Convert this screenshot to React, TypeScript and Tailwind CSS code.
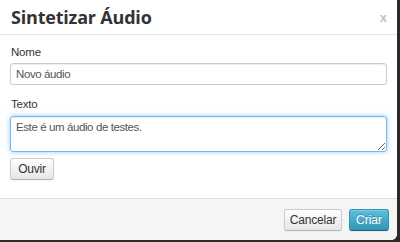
import React from 'react';

const App: React.FC = () => {
  return (
    <div className="w-[400px] h-[242px] bg-[#2a2a2a] overflow-hidden">
      <div className="w-[397px] h-[240px] bg-white rounded-br-[6px] flex flex-col overflow-hidden font-['Liberation_Sans',Arial,sans-serif] text-[#333]">
        {/* header */}
        <div className="h-[35px] border-b border-[#e5e5e5] flex items-center justify-between pl-[11px] pr-[10px]">
          <h3 className="font-['Open_Sans',sans-serif] font-bold text-[18px] leading-none text-[#333] tracking-[-0.2px]">Sintetizar Áudio</h3>
          <span className="text-[#c4c4c4] text-[13px] font-bold leading-none">x</span>
        </div>

        {/* body */}
        <div className="flex-1 px-[10px] pt-[10px]">
          <label className="block text-[11.5px] leading-[14px] tracking-[-0.2px] mb-[4px] pl-[1px]">Nome</label>
          <input
            readOnly
            value="Novo áudio"
            className="block w-[377px] h-[22px] border border-[#ccc] rounded-[3px] px-[5px] text-[11.5px] tracking-[-0.4px] text-[#555] shadow-[inset_0_1px_1px_rgba(0,0,0,0.075)] outline-none"
          />

          <label className="block text-[11.5px] leading-[14px] tracking-[-0.2px] mt-[12px] mb-[5px] pl-[1px]">Texto</label>
          <textarea
            readOnly
            value="Este é um áudio de testes."
            className="block w-[377px] h-[36px] border border-[rgba(82,168,236,0.8)] rounded-[3px] px-[5px] py-[3px] text-[11.5px] leading-[14px] tracking-[-0.4px] text-[#555] shadow-[inset_0_1px_1px_rgba(0,0,0,0.075),0_0_5px_rgba(82,168,236,0.6)] outline-none resize-y"
          />

          <button className="mt-[6px] h-[22px] w-[44px] border border-[#ccc] border-b-[#b3b3b3] rounded-[3px] bg-gradient-to-b from-white to-[#e6e6e6] text-[12px] tracking-[-0.2px] text-[#333] shadow-[inset_0_1px_0_rgba(255,255,255,0.2),0_1px_2px_rgba(0,0,0,0.05)]">
            Ouvir
          </button>
        </div>

        {/* footer */}
        <div className="h-[42px] bg-[#f5f5f5] border-t border-[#ddd] flex items-start justify-end gap-[7px] pt-[10px] pr-[8px]">
          <button className="h-[22px] w-[58px] border border-[#ccc] border-b-[#b3b3b3] rounded-[3px] bg-gradient-to-b from-white to-[#e6e6e6] text-[12px] tracking-[-0.2px] text-[#333] shadow-[inset_0_1px_0_rgba(255,255,255,0.2),0_1px_2px_rgba(0,0,0,0.05)]">
            Cancelar
          </button>
          <button className="h-[22px] w-[40px] border border-[#2f96b4] border-b-[#1f6377] rounded-[3px] bg-gradient-to-b from-[#5bc0de] to-[#2f96b4] text-[12px] text-white [text-shadow:0_-1px_0_rgba(0,0,0,0.25)] shadow-[inset_0_1px_0_rgba(255,255,255,0.2),0_1px_2px_rgba(0,0,0,0.05)]">
            Criar
          </button>
        </div>
      </div>
    </div>
  );
};

export default App;
